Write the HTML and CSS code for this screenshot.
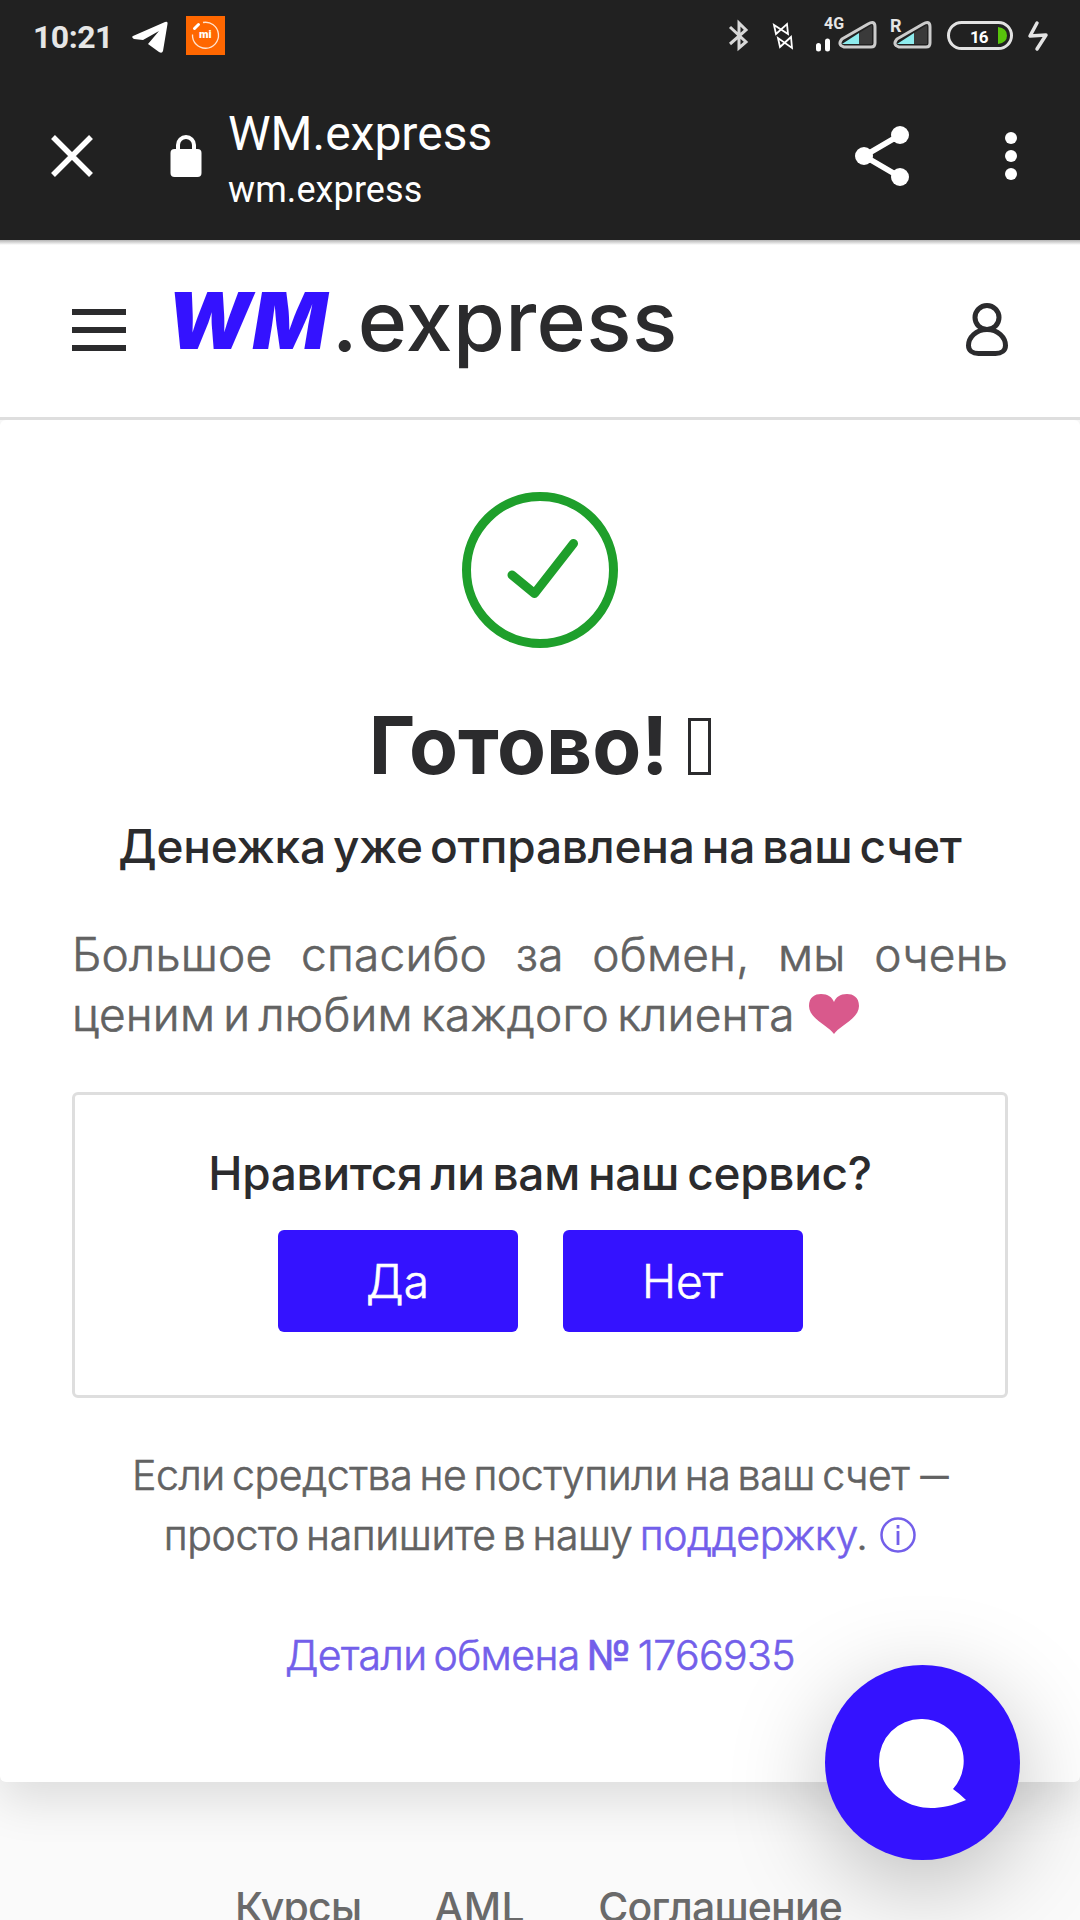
FILE: index.html
```html
<!DOCTYPE html>
<html lang="ru">
<head>
  <meta charset="utf-8">
  <title>WM.express</title>
  <link rel="stylesheet" href="styles.css">
</head>
<body>
  <div class="status-bar">
    <span class="time">10:21</span>
    <svg class="telegram" width="36" height="33" viewBox="0 0 36 33"><path d="M1 15 L33 1 Q36 0 35.500 3 L31 30 Q30 33 27 31 L16 23 L27 10 L11 19 L2 18 Q-1 16 1 15Z" fill="#fff"/></svg>
    <div class="mi-app">
      <svg width="38" height="39" viewBox="0 0 38 39"><path d="M17 6.500a13 13 0 1 1-10.500 12" fill="none" stroke="#ffe4d0" stroke-width="1.300"/><path d="M8.500 12.500l4-4" stroke="#fff" stroke-width="3" stroke-linecap="round"/></svg>
      <span>mi</span>
    </div>
    <svg class="indicators" width="340" height="60" viewBox="0 0 340 60">
      <g fill="none" stroke="#d8d8d8" stroke-width="3">
        <path d="M10 27l16 15-7 6V23l7 7-16 14"/>
      </g>
      <g fill="none" stroke="#fff" stroke-width="1.800">
        <path d="M54 25l2 9 11-10 1 10zM58 38l2 9 11-10 1 11z"/>
      </g>
      <g stroke="#fff" stroke-width="5" stroke-linecap="round"><path d="M98.500 45.500v3.500M107.500 41v8"/></g>
      <path d="M122 44l17-11v11z" fill="#8eecee"/>
      <path d="M139 33l13-8v19h-13z" fill="#3a3a3a"/>
      <path d="M122 39l26-15q7-4 7 3v16q0 4-4 4h-27q-7-2-2-8z" fill="none" stroke="#ccc" stroke-width="3"/>
      <path d="M177 44l17-11v11z" fill="#8eecee"/>
      <path d="M194 33l13-8v19h-13z" fill="#3a3a3a"/>
      <path d="M177 39l26-15q7-4 7 3v16q0 4-4 4h-27q-7-2-2-8z" fill="none" stroke="#ccc" stroke-width="3"/>
      <rect x="228.500" y="22.500" width="63" height="26" rx="13" fill="none" stroke="#e2e2e2" stroke-width="3"/>
      <path d="M278 27q9 1 9 8.500t-9 8.500z" fill="#58c40c"/>
      <path d="M317 23l-7 13 16-1-9 14" fill="none" stroke="#e4e4e4" stroke-width="3.500" stroke-linecap="round" stroke-linejoin="round"/>
      <text class="net" x="104" y="29">4G</text>
      <text class="net roam" x="170" y="32">R</text>
      <text class="charge" x="250" y="43">16</text>
    </svg>
  </div>

  <div class="toolbar">
    <svg class="close" width="42" height="42" viewBox="0 0 42 42"><path d="M2 2l38 38M40 2L2 40" stroke="#fff" stroke-width="5.500"/></svg>
    <svg class="lock" width="32" height="42" viewBox="0 0 32 42"><rect x="0.500" y="14" width="31" height="28" rx="4" fill="#fff"/><path d="M8 16v-6a8 8 0 0 1 16 0v6" fill="none" stroke="#fff" stroke-width="4"/></svg>
    <div class="page-info">
      <div class="page-title">WM.express</div>
      <div class="page-url">wm.express</div>
    </div>
    <svg class="share" width="54" height="60" viewBox="0 0 54 60"><path d="M45 9L9 30l36 21" fill="none" stroke="#fff" stroke-width="5.500"/><g fill="#fff"><circle cx="45" cy="9" r="9"/><circle cx="9" cy="30" r="9"/><circle cx="45" cy="51" r="9"/></g></svg>
    <svg class="more" width="12" height="48" viewBox="0 0 12 48" fill="#fff"><circle cx="6" cy="6" r="6"/><circle cx="6" cy="24" r="6"/><circle cx="6" cy="42" r="6"/></svg>
  </div>

  <header class="site-header">
    <div class="burger"><i></i><i></i><i></i></div>
    <div class="logo"><span class="logo-wm">WM</span><span class="logo-text">.express</span></div>
    <svg class="user" width="42" height="54" viewBox="0 0 42 54" fill="none" stroke="#2b2b2d" stroke-width="5"><circle cx="21" cy="14.500" r="12"/><path d="M21 26.500c-11 0-18.500 8-18.500 16 0 5 4 8 10 8h17c6 0 10-3 10-8 0-8-7.500-16-18.500-16z"/></svg>
  </header>

  <main class="card">
    <svg class="done" width="156" height="156" viewBox="0 0 156 156" fill="none" stroke="#1e9f2b" stroke-width="9"><circle cx="78" cy="78" r="73.500"/><path d="M50 83l22.500 18.500L111.500 51.500" stroke-linecap="round" stroke-linejoin="round"/></svg>
    <h1><span>Готово!</span><i class="emoji"></i></h1>
    <h2>Денежка уже отправлена на ваш счет</h2>
    <p class="thanks">Большое спасибо за обмен, мы очень ценим и любим каждого клиента <svg class="heart" width="50" height="40" viewBox="0 0 50 40"><path d="M25 40C20 32 0 25 0 12 0 3 6 0 12 0c7 0 11 3 13 8 2-5 6-8 13-8 6 0 12 3 12 12 0 13-20 20-25 28z" fill="#d9598c"/></svg></p>

    <div class="poll">
      <div class="question">Нравится ли вам наш сервис?</div>
      <div class="buttons">
        <button type="button">Да</button>
        <button type="button">Нет</button>
      </div>
    </div>

    <p class="support">Если средства не поступили на ваш счет <span class="dash">—</span><br>просто напишите в нашу <a>поддержку</a>.<svg class="info" width="36" height="36" viewBox="0 0 36 36" fill="none" stroke="#735fea"><circle cx="18" cy="18" r="16.500" stroke-width="2.500"/><path d="M18 14v14M18 8v3.500" stroke-width="2.800"/></svg></p>
    <p class="details"><a>Детали обмена <span class="num">№</span> 1766935</a></p>
  </main>

  <footer class="footer">
    <a>Курсы</a>
    <a class="aml">AML</a>
    <a>Соглашение</a>
  </footer>

  <div class="chat">
    <svg width="88" height="90" viewBox="0 0 88 90"><path d="M42 0a42 42 0 0 1 32 70q7 5 13 11c-14 6-25 8-35 8C25 89 0 69 0 42A42 42 0 0 1 42 0z" fill="#fff"/></svg>
  </div>
</body>
</html>
```

FILE: styles.css
```css
* {
  box-sizing: border-box;
}
body {
  margin: 0;
  height: 1920px;
  overflow: hidden;
  position: relative;
  background: #fafafa;
  color: #2b2b2d;
  font-family: Inter, "Noto Sans", sans-serif;
}
h1, h2, p {
  margin: 0;
}
svg {
  display: block;
  flex: none;
}
.status-bar {
  display: flex;
  height: 72px;
  padding-left: 33px;
  background: #212121;
  font-family: Roboto, sans-serif;
}
.time {
  width: 99px;
  line-height: 74px;
  font-size: 32px;
  font-weight: 700;
  letter-spacing: -0.5px;
  color: #e6e6e6;
}
.telegram {
  margin-top: 21px;
}
.mi-app {
  position: relative;
  width: 39px;
  height: 39px;
  margin: 16px 0 0 18px;
  background: #ff6700;
}
.mi-app span {
  position: absolute;
  left: 13px;
  top: 12px;
  font-size: 11px;
  line-height: 13px;
  font-weight: 900;
  color: #fff;
}
.indicators {
  margin: 0 20px 0 auto;
}
.net {
  font: 700 16px Roboto, sans-serif;
  fill: #e6e6e6;
}
.roam {
  font-size: 18px;
}
.charge {
  font: 700 17px Roboto, sans-serif;
  letter-spacing: -1px;
  fill: #fff;
}
.toolbar {
  display: flex;
  align-items: center;
  height: 168px;
  padding: 0 63px 0 51px;
  background: #212121;
  color: #fff;
  font-family: Roboto, sans-serif;
}
.lock {
  margin-left: 77px;
}
.page-info {
  margin: 8px auto 0 26px;
}
.page-title {
  font-size: 48px;
  line-height: 60px;
}
.page-url {
  font-size: 36px;
  line-height: 52px;
  letter-spacing: 0.1px;
}
.more {
  margin-left: 96px;
}
.site-header {
  position: relative;
  display: flex;
  height: 180px;
  padding: 0 72px;
  background: linear-gradient(#b4b4b4, #fff 5px);
  border-bottom: 3px solid #dedede;
}
.burger {
  display: flex;
  flex-direction: column;
  gap: 12px;
  width: 54px;
  margin-top: 69px;
}
.burger i {
  height: 6px;
  background: #2b2b2d;
}
.logo {
  display: flex;
  margin: 29px auto 0 41px;
  line-height: 104px;
}
.logo-wm {
  width: 165px;
  font-size: 78px;
  font-weight: 900;
  font-style: italic;
  letter-spacing: 1px;
  color: #3412ff;
}
.logo-text {
  font-size: 84px;
  font-weight: 500;
  letter-spacing: 0.4px;
}
.user {
  margin-top: 63px;
}
.card {
  height: 1362px;
  padding: 72px 72px 0;
  background: #fff;
  border-radius: 6px;
  box-shadow: 0 18px 48px rgba(0, 0, 0, 0.12);
  text-align: center;
}
.done {
  margin: 0 auto 49px;
}
h1 {
  display: flex;
  justify-content: center;
  font-size: 80px;
  line-height: 96px;
  font-weight: 700;
}
.emoji {
  width: 23px;
  height: 57px;
  margin: 21px 0 0 20px;
  border: 3px solid #2b2b2d;
}
h2 {
  margin-top: 23px;
  font-size: 46px;
  line-height: 60px;
  font-weight: 500;
  letter-spacing: -0.2px;
  word-spacing: -5px;
  white-space: nowrap;
}
.thanks {
  margin-top: 48px;
  font-size: 46px;
  line-height: 60px;
  font-weight: 300;
  letter-spacing: 0.2px;
  color: #626262;
  word-spacing: -5px;
  text-align: justify;
  -webkit-text-stroke: 0.6px;
}
.heart {
  display: inline-block;
  margin-left: 6px;
  vertical-align: -3px;
}
.poll {
  height: 306px;
  margin-top: 48px;
  padding-top: 48px;
  border: 3px solid #dedede;
  border-radius: 6px;
}
.question {
  font-size: 46px;
  line-height: 60px;
  font-weight: 500;
  letter-spacing: -0.3px;
  word-spacing: -4px;
}
.buttons {
  display: flex;
  justify-content: center;
  gap: 45px;
  margin-top: 27px;
}
.buttons button {
  width: 240px;
  height: 102px;
  padding: 0;
  border: none;
  border-radius: 6px;
  background: #3412ff;
  color: #fff;
  font: 300 46px Inter, sans-serif;
  -webkit-text-stroke: 0.6px;
}
.support, .details {
  font-size: 41px;
  line-height: 60px;
  font-weight: 300;
  letter-spacing: -0.4px;
  word-spacing: -4px;
  color: #626262;
  white-space: nowrap;
  -webkit-text-stroke: 0.6px;
}
.support {
  margin-top: 47px;
}
.dash {
  margin-left: 4px;
  font-size: 28px;
  line-height: 1;
  font-weight: 500;
  vertical-align: 4px;
}
.support a, .details a {
  color: #735fea;
}
.details {
  margin-top: 60px;
  letter-spacing: -0.6px;
}
.num {
  font-weight: 400;
}
.info {
  display: inline-block;
  margin-left: 13px;
  vertical-align: -3px;
}
.footer {
  display: flex;
  gap: 73px;
  margin-top: 95px;
  padding-left: 235px;
  font-size: 41px;
  line-height: 60px;
  font-weight: 500;
  letter-spacing: -0.8px;
  color: #6a6a6a;
}
.aml {
  letter-spacing: 0.4px;
}
.chat {
  position: absolute;
  left: 825px;
  top: 1665px;
  width: 195px;
  height: 195px;
  padding: 54px 0 0 54px;
  border-radius: 50%;
  background: #3412ff;
  box-shadow: 0 24px 96px rgba(0, 0, 0, 0.25);
}
```
